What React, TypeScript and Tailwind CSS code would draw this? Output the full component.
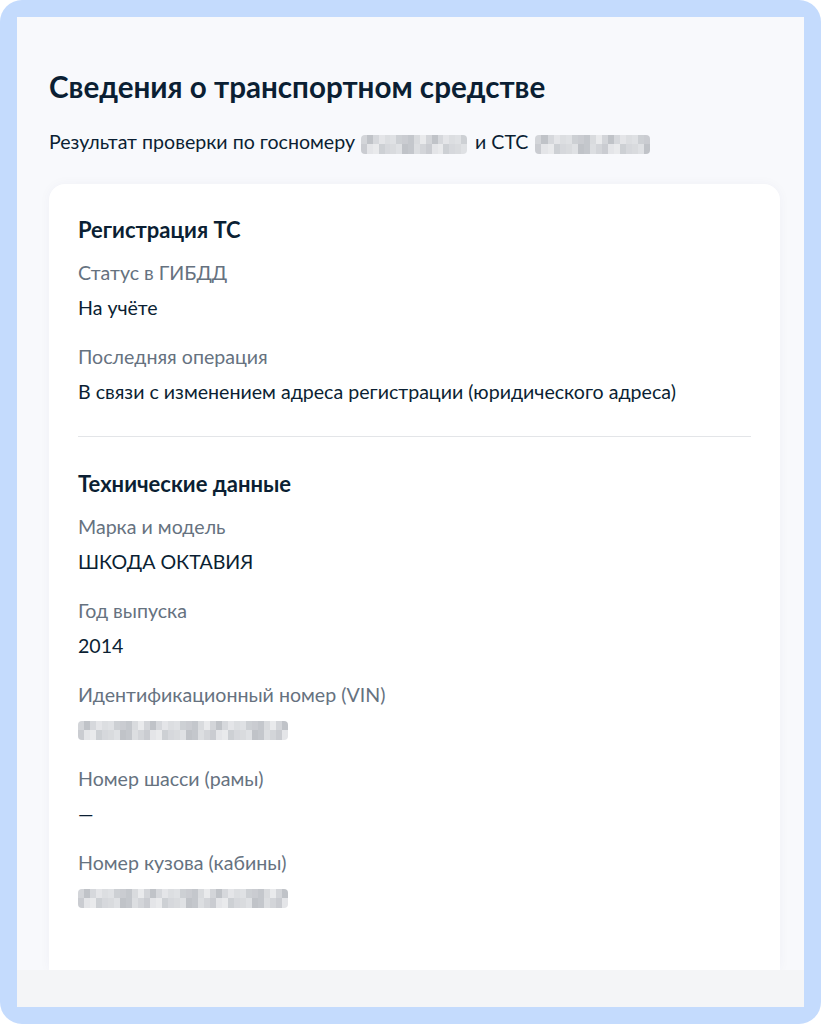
const Blur = ({ width }: { width: number }) => {
  const shades = ['#d9dbde', '#cdd0d4', '#e4e5e8', '#d3d5d9', '#c4c7cc', '#dfe1e4', '#d6d8dc', '#e9eaec', '#caccd1', '#dcdee1', '#c0c3c8'];
  const cells = Math.round(width / 6);
  return (
    <span
      className="inline-flex h-[19px] shrink-0 overflow-hidden rounded-[4px] align-middle blur-[0.6px]"
      style={{ width }}
    >
      {Array.from({ length: cells }).map((_, i) => (
        <span
          key={i}
          className="flex h-full flex-1 flex-col"
        >
          <span className="flex-1" style={{ background: shades[(i * 7 + 3) % shades.length] }} />
          <span className="flex-1" style={{ background: shades[(i * 5 + 8) % shades.length] }} />
        </span>
      ))}
    </span>
  );
};

interface FieldProps {
  label: string;
  value?: string;
  blur?: number;
  first?: boolean;
}

const Field = ({ label, value, blur, first }: FieldProps) => (
  <div className={first ? 'mt-[17px]' : 'mt-[25px]'}>
    <div className="text-[19.6px] leading-6 text-[#66727f]">{label}</div>
    <div className="mt-[11px] flex h-6 items-center text-[19.6px] leading-6 text-[#0b1f33]">
      {blur ? <Blur width={blur} /> : value}
    </div>
  </div>
);

export default function App() {
  return (
    <div
      className="h-[1024px] w-[821px] overflow-hidden rounded-[22px] bg-[#c4dbfd] p-[17px]"
      style={{ fontFamily: 'Lato, "Noto Sans", sans-serif' }}
    >
      <div className="flex h-full flex-col overflow-hidden bg-[#f8f9fc] pl-8 pr-6">
        <h1 className="mt-[54px] text-[29.6px] font-bold leading-8 text-[#0b1f33]">
          Сведения о транспортном средстве
        </h1>
        <p className="mt-[27px] flex items-center text-[19.6px] leading-6 text-[#0b1f33]">
          <span>Результат проверки по госномеру</span>
          <span className="ml-[6px]"><Blur width={106} /></span>
          <span className="ml-[8px]">и СТС</span>
          <span className="ml-[7px]"><Blur width={115} /></span>
        </p>
        <div className="mt-[30px] flex-1 rounded-t-2xl bg-white px-[29px] pt-8 shadow-[0_0_12px_rgba(20,40,90,0.04)]">
          <h2 className="text-[22px] font-bold leading-7 text-[#0b1f33]">Регистрация ТС</h2>
          <Field first label="Статус в ГИБДД" value="На учёте" />
          <Field label="Последняя операция" value="В связи с изменением адреса регистрации (юридического адреса)" />
          <div className="mt-8 h-px bg-[#e3e5e8]" />
          <h2 className="mt-[33px] text-[22px] font-bold leading-7 text-[#0b1f33]">Технические данные</h2>
          <Field first label="Марка и модель" value="ШКОДА ОКТАВИЯ" />
          <Field label="Год выпуска" value="2014" />
          <Field label="Идентификационный номер (VIN)" blur={210} />
          <Field label="Номер шасси (рамы)" value="—" />
          <Field label="Номер кузова (кабины)" blur={210} />
        </div>
        <div className="-ml-8 -mr-6 h-[37px] bg-[#f4f5f7]" />
      </div>
    </div>
  );
}
